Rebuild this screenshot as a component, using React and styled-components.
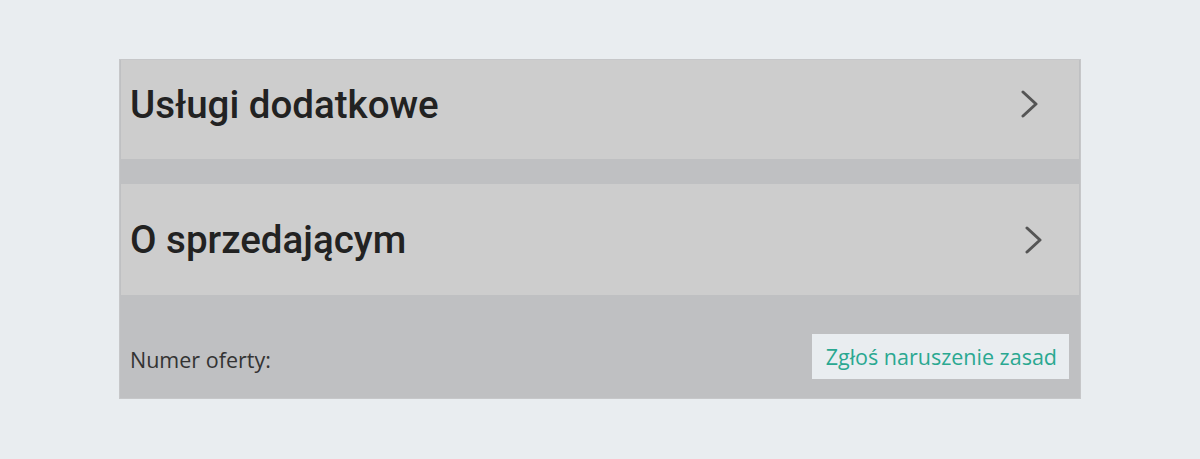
import React from 'react';
import styled, { createGlobalStyle } from 'styled-components';

const GlobalStyle = createGlobalStyle`
  html, body {
    margin: 0;
    padding: 0;
    background: #e9edf0;
  }
`;

const Page = styled.div`
  padding: 59px 0 0 119px;
`;

const Panel = styled.section`
  width: 958px;
  background: #bfc0c2;
  border: 1px solid #c6c7c9;
  padding: 0 1px;
  box-sizing: content-box;
  display: flex;
  flex-direction: column;
`;

const Row = styled.div`
  display: flex;
  align-items: center;
  justify-content: space-between;
  background: #cdcdcd;
  height: ${p => p.$height}px;
  margin-bottom: ${p => p.$gap}px;
  padding: 0 ${p => p.$chevronRight}px ${p => p.$shift}px 9px;
  box-sizing: border-box;
  cursor: pointer;
`;

const Title = styled.h2`
  margin: 0;
  font-family: Roboto, "Noto Sans", sans-serif;
  font-weight: 500;
  font-size: 38.5px;
  color: #222;
`;

const Footer = styled.div`
  display: flex;
  align-items: flex-end;
  justify-content: space-between;
  height: 103px;
  padding: 0 10px 19px 9px;
  box-sizing: border-box;
  font-family: "Open Sans", sans-serif;
`;

const OfferNumber = styled.span`
  font-size: 21.5px;
  color: #333;
  padding-bottom: 5px;
`;

const ReportButton = styled.button`
  background: #e9edf0;
  border: none;
  height: 45px;
  padding: 0 12px 0 14px;
  font-family: "Open Sans", sans-serif;
  font-size: 21.5px;
  color: #2aa891;
  cursor: pointer;
`;

const Chevron = () => (
  <svg width="18" height="28" viewBox="0 0 18 28" fill="none">
    <path d="M2 2l13 12L2 26" stroke="#555" strokeWidth="3" strokeLinecap="round" strokeLinejoin="round" />
  </svg>
);

const sections = [
  { title: 'Usługi dodatkowe', height: 99, shift: 11, chevronRight: 40, gap: 25 },
  { title: 'O sprzedającym', height: 111, shift: 0, chevronRight: 36, gap: 0 },
];

export default function App() {
  return (
    <>
      <GlobalStyle />
      <Page>
        <Panel>
          {sections.map(s => (
            <Row key={s.title} $height={s.height} $shift={s.shift} $chevronRight={s.chevronRight} $gap={s.gap}>
              <Title>{s.title}</Title>
              <Chevron />
            </Row>
          ))}
          <Footer>
            <OfferNumber>Numer oferty:</OfferNumber>
            <ReportButton>Zgłoś naruszenie zasad</ReportButton>
          </Footer>
        </Panel>
      </Page>
    </>
  );
}
